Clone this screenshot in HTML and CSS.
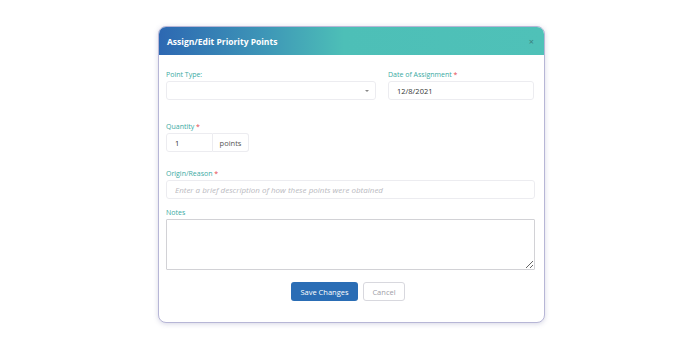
FILE: index.html
```html
<!DOCTYPE html>
<html lang="en">
<head>
    <meta charset="UTF-8">
    <meta name="viewport" content="width=device-width, initial-scale=1.0">
    <title>Assign/Edit Priority Points</title>
    <link rel="stylesheet" href="styles.css">
</head>
<body>

<div class="modal">

    <div class="modal-header">
        <h2>Assign/Edit Priority Points</h2>
        <span class="close-button">&times;</span>
    </div>

    <div class="modal-body">

        <div class="form-row">
            <div class="field field-wide">
                <label>Point Type:</label>
                <div class="select-box">
                    <span class="caret"></span>
                </div>
            </div>
            <div class="field field-narrow">
                <label>Date of Assignment <span class="required">*</span></label>
                <input type="text" value="12/8/2021">
            </div>
        </div>

        <div class="field quantity-field">
            <label>Quantity <span class="required">*</span></label>
            <div class="input-group">
                <input type="text" value="1">
                <span class="addon">points</span>
            </div>
        </div>

        <div class="field origin-field">
            <label>Origin/Reason <span class="required">*</span></label>
            <input type="text" placeholder="Enter a brief description of how these points were obtained">
        </div>

        <div class="field notes-field">
            <label>Notes</label>
            <textarea></textarea>
        </div>

        <div class="button-row">
            <button class="save-button">Save Changes</button>
            <button class="cancel-button">Cancel</button>
        </div>

    </div>

</div>

</body>
</html>
```

FILE: styles.css
```css
body {
    margin: 0;
    height: 350px;
    background-color: white;
    font-family: "Open Sans", "DejaVu Sans", sans-serif;
}

.modal {
    position: relative;
    top: 26px;
    left: 158px;
    width: 387px;
    height: 297px;
    background-color: white;
    border: 1.5px solid #b7b6d6;
    border-radius: 8px;
    box-shadow: 0 1px 5px rgba(120, 118, 170, 0.3);
    overflow: hidden;
    box-sizing: border-box;
}

.modal-header {
    height: 28px;
    display: flex;
    align-items: center;
    justify-content: space-between;
    padding: 0 10px 0 8px;
    background: linear-gradient(90deg, #2d68b2 0%, #3e97b7 28%, #4dbfb7 48%, #4fc1b8 100%);
}

.modal-header h2 {
    margin: 0;
    font-size: 8.5px;
    font-weight: 700;
    color: white;
}

.close-button {
    font-size: 9px;
    line-height: 9px;
    color: #3b7f80;
}

.modal-body {
    padding: 15px 9px 0 7px;
}

.form-row {
    display: flex;
    gap: 12px;
}

.field-wide {
    width: 210px;
}

.field-narrow {
    width: 146px;
}

label {
    display: block;
    font-size: 7px;
    line-height: 9px;
    color: #3aaaa3;
    margin-bottom: 2px;
}

.required {
    color: #e5484d;
}

input, textarea, .select-box {
    box-sizing: border-box;
    display: block;
    width: 100%;
    height: 19px;
    border: 1px solid #ececf0;
    border-radius: 3px;
    background-color: white;
    font-family: inherit;
    font-size: 7.5px;
    color: #333;
    padding: 0 8px;
    outline: none;
}

input::placeholder {
    color: #b9b9c0;
    font-style: italic;
    font-size: 8px;
}

.select-box {
    position: relative;
}

.caret {
    position: absolute;
    right: 6px;
    top: 8px;
    border-left: 2.5px solid transparent;
    border-right: 2.5px solid transparent;
    border-top: 2.5px solid #888;
}

.quantity-field {
    margin-top: 22px;
}

.input-group {
    display: flex;
    width: 83px;
}

.input-group input {
    width: 47px;
    border-radius: 3px 0 0 3px;
}

.addon {
    box-sizing: border-box;
    width: 36px;
    height: 19px;
    display: flex;
    align-items: center;
    justify-content: center;
    border: 1px solid #ececf0;
    border-left: none;
    border-radius: 0 3px 3px 0;
    font-size: 7.5px;
    color: #555;
}

.origin-field {
    margin-top: 17px;
}

.notes-field {
    margin-top: 9px;
}

textarea {
    height: 51px;
    border: 1px solid #d2d2d6;
    border-radius: 1px;
    resize: vertical;
}

.button-row {
    display: flex;
    justify-content: center;
    gap: 5px;
    margin-top: 12px;
    padding-right: 5px;
}

.save-button {
    background-color: #2a6db5;
    color: white;
    font-family: inherit;
    font-size: 7.5px;
    width: 67px;
    height: 19px;
    border: none;
    border-radius: 3px;
}

.cancel-button {
    background-color: white;
    color: #a0a0a8;
    font-family: inherit;
    font-size: 7.5px;
    width: 42px;
    height: 19px;
    border: 1px solid #d8d8de;
    border-radius: 3px;
}
```
